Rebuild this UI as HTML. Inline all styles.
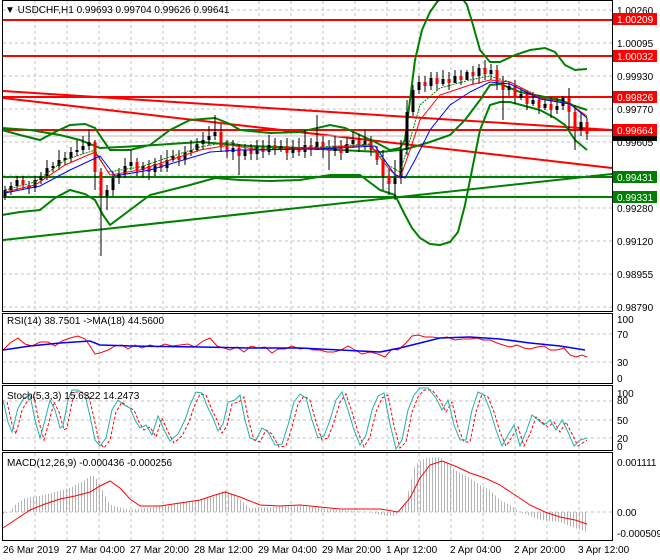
<!DOCTYPE html>
<html><head><meta charset="utf-8"><style>
html,body{margin:0;padding:0;background:#fff;}
svg{display:block;font-family:"Liberation Sans",sans-serif;}
</style></head><body>
<svg width="660" height="560" xmlns="http://www.w3.org/2000/svg">
<defs><pattern id="h" width="3" height="10" patternUnits="userSpaceOnUse"><rect x="0" y="0" width="1" height="10" fill="#b4b4b4"/></pattern></defs>
<rect width="660" height="560" fill="#fff"/>
<g stroke="#c0c0c0" stroke-dasharray="3,3" fill="none">
<path d="M35,1V311M67,1V311M99,1V311M131,1V311M163,1V311M195,1V311M227,1V311M259,1V311M291,1V311M323,1V311M355,1V311M387,1V311M419,1V311M451,1V311M483,1V311M515,1V311M547,1V311M579,1V311"/>
<path d="M35,314V383M67,314V383M99,314V383M131,314V383M163,314V383M195,314V383M227,314V383M259,314V383M291,314V383M323,314V383M355,314V383M387,314V383M419,314V383M451,314V383M483,314V383M515,314V383M547,314V383M579,314V383"/>
<path d="M35,386V450M67,386V450M99,386V450M131,386V450M163,386V450M195,386V450M227,386V450M259,386V450M291,386V450M323,386V450M355,386V450M387,386V450M419,386V450M451,386V450M483,386V450M515,386V450M547,386V450M579,386V450"/>
<path d="M35,453V540M67,453V540M99,453V540M131,453V540M163,453V540M195,453V540M227,453V540M259,453V540M291,453V540M323,453V540M355,453V540M387,453V540M419,453V540M451,453V540M483,453V540M515,453V540M547,453V540M579,453V540"/>
<path d="M3,10H612M3,43H612M3,76H612M3,109H612M3,142H612M3,175H612M3,208H612M3,241H612M3,274H612M3,307H612M3,334H612M3,362H612M3,401H612M3,420H612M3,438H612M3,512H612"/>
</g>
<!-- levels -->
<g stroke-width="2">
<path d="M3,20H612M3,56H612M3,97H612M3,130H612" stroke="#f00"/>
<path d="M3,177H612M3,197H612" stroke="#008000"/>
<path d="M3,91L612,130M3,98L612,168" stroke="#f00"/>
<path d="M3,240L612,174" stroke="#008000"/>
</g>
<path d="M3,136H612" stroke="#c0c0c0"/>
<!-- bands -->
<g fill="none" stroke="#008000" stroke-width="2">
<polyline points="2,130 20,135 40,140 55,132 70,125 85,124 95,128 103,140 110,150 130,150 150,145 170,130 190,120 215,118 230,124 240,130 270,133 300,132 330,125 345,128 360,135 375,142 390,150 400,148 405,140 410,100 415,60 422,30 430,12 437,2 445,-5 460,-5 467,5 473,25 480,50 490,62 500,62 515,55 530,50 545,48 555,52 565,65 575,70 587,69"/>
<polyline points="2,215 20,212 40,210 55,198 70,190 85,194 95,200 103,215 110,225 130,210 150,195 170,190 190,185 215,178 240,180 270,181 300,180 330,175 360,175 380,190 395,195 405,215 412,228 420,238 430,244 440,245 450,242 458,232 465,205 472,170 480,130 490,105 500,102 510,102 525,106 540,110 555,118 565,125 575,140 587,150"/>
<polyline points="2,128 30,130 60,135 80,140 100,148 140,146 200,142 250,146 300,148 340,150 380,152 400,150 410,148 430,142 450,135 465,120 480,100 490,85 500,84 520,92 540,96 560,100 575,106 587,110"/>
</g>
<!-- candles -->
<path fill="none" stroke="#000" stroke-width="1" d="M5,186V200M11,182V195M17,176V190M23,176V190M29,181V194M35,176V192M41,172V184M47,160V180M53,162V172M59,150V170M65,152V165M71,147V162M77,140V156M83,136V154M89,130V150M95,140V190M101,168V256M107,185V210M113,172V196M119,168V184M125,158V178M131,150V170M137,158V176M143,162V178M149,160V180M155,158V176M161,155V172M167,150V172M173,150V162M179,150V166M185,146V165M191,140V156M197,138V152M203,132V150M209,126V145M215,115V140M221,124V152M227,140V158M233,140V160M239,144V175M245,144V160M251,144V160M257,140V160M263,140V158M269,135V155M275,138V155M281,140V152M287,138V160M293,140V158M299,138V156M305,130V158M311,138V156M317,115V150M323,136V158M329,140V170M335,136V156M341,140V160M347,138V150M353,132V148M359,134V152M365,130V150M371,136V156M377,146V165M383,150V190M389,168V195M395,160V200M401,140V184M407,100V155M413,85V116M419,76V94M425,76V92M431,72V90M437,72V90M443,70V86M449,72V90M455,70V80M461,70V85M467,70V80M473,66V84M479,64V84M485,60V80M491,64V80M497,65V90M503,76V120M509,82V96M515,80V104M521,88V100M527,90V110M533,92V106M539,95V114M545,98V110M551,97V118M557,98V114M563,96V110M569,88V130M575,105V150M581,112V136M587,118V140"/>
<g fill="none" stroke-width="3">
<path stroke="#000" d="M5,196V190M11,190V186M17,186V180M35,188V180M41,180V176M47,176V168M53,168V166M59,166V160M65,160V158M71,158V152M77,152V150M83,150V146M89,146V142M107,196V190M113,190V178M119,178V174M125,174V166M131,166V162M143,170V166M155,172V164M167,168V160M173,160V156M185,160V152M191,152V150M197,150V144M203,144V140M209,140V136M215,136V132M233,152V148M245,156V150M257,154V147M269,152V145M281,150V146M293,153V147M305,152V145M317,150V142M335,151V146M347,153V144M353,144V140M365,145V141M395,184V178M401,178V150M407,150V112M413,112V90M419,90V82M431,86V78M443,84V79M455,83V76M467,80V72M479,76V68M491,74V70M509,90V86M521,98V94M533,104V100M545,108V104M557,110V106M563,106V98M581,130V122"/>
<path stroke="#f00" d="M23,180V185M29,185V188M95,142V172M101,172V196M137,162V170M149,166V172M161,164V168M179,156V160M221,132V146M227,146V152M239,148V156M251,150V154M263,147V152M275,145V150M287,146V153M299,147V152M311,145V150M323,142V148M329,148V151M341,146V153M359,140V145M371,141V150M377,150V160M383,160V176M389,176V184M425,82V86M437,78V84M449,79V83M461,76V80M473,72V76M485,68V74M497,70V82M503,82V90M515,86V98M527,94V104M539,100V108M551,104V110M569,98V112M575,112V130M587,122V134"/>
</g>
<!-- MAs -->
<g fill="none" stroke-width="1">
<polyline stroke="#008000" stroke-dasharray="2,1" points="5,190 35,182 65,160 95,150 108,172 140,167 200,147 228,142 260,149 320,147 370,144 388,165 400,172 410,140 420,105 440,88 470,80 490,76 510,82 540,97 570,103 587,117"/>
<polyline stroke="#f00" points="5,192 35,185 65,165 95,152 110,175 140,170 200,150 230,145 260,150 320,148 370,145 390,170 400,178 410,150 420,120 440,95 470,85 490,80 510,82 540,98 570,104 587,116"/>
<polyline stroke="#00f" points="5,193 40,186 70,170 100,156 115,176 150,170 210,152 240,150 320,149 375,146 395,175 405,178 415,160 430,130 450,105 470,92 490,82 510,84 540,99 570,104 587,118"/>
</g>
<!-- RSI -->
<polyline fill="none" stroke="#f00" points="3,350 10,343 18,338 25,344 32,346 40,342 48,342 55,346 62,341 70,338 78,336 85,339 90,346 95,354 100,353 108,350 115,346 122,345 128,349 135,345 142,348 150,345 158,347 165,344 172,346 180,345 188,344 195,347 203,341 210,338 217,346 224,348 230,350 237,347 244,352 251,346 258,348 265,347 272,353 278,349 285,349 292,346 300,349 307,348 313,350 320,350 327,352 334,352 341,350 348,346 355,350 362,354 370,352 378,354 385,357 392,349 398,350 405,344 412,336 418,335 425,337 432,337 440,338 447,337 455,340 462,339 470,339 477,338 483,340 490,340 497,343 503,345 510,347 517,345 524,348 530,349 537,347 544,346 550,350 557,350 564,348 570,355 576,357 582,355 587,357"/>
<polyline fill="none" stroke="#00f" stroke-width="1.5" points="3,350 30,346 60,343 90,341 100,345 130,346 200,347 250,348 300,348 340,350 380,352 400,348 420,343 440,338 470,337 500,339 530,343 560,346 585,350"/>
<!-- Stoch -->
<polyline fill="none" stroke="#f00" stroke-dasharray="3,2" transform="translate(4,2)" points="3,400 8,422 12,432 18,408 24,398 30,395 35,420 40,438 45,420 50,400 55,410 60,428 63,426 68,400 72,390 78,390 85,395 90,416 95,440 100,446 106,438 112,410 118,400 124,405 130,408 135,420 140,428 146,425 152,435 158,416 164,430 170,441 178,434 185,420 190,405 196,392 202,393 208,408 213,418 218,431 223,424 228,402 235,400 240,395 245,420 250,438 256,440 262,428 268,432 275,445 282,444 288,425 294,402 300,394 306,398 312,420 318,438 324,436 330,420 336,400 342,392 348,410 354,430 360,445 366,435 372,410 378,396 384,393 390,424 396,446 402,440 408,410 414,395 420,388 428,388 436,398 442,410 448,400 454,425 460,440 466,440 472,410 478,392 484,395 490,410 496,430 502,444 508,435 514,425 520,444 526,432 532,415 538,420 544,425 550,420 556,430 562,420 568,432 574,444 580,440 583,438"/>
<polyline fill="none" stroke="#20b2aa" points="3,400 8,422 12,432 18,408 24,398 30,395 35,420 40,438 45,420 50,400 55,410 60,428 63,426 68,400 72,390 78,390 85,395 90,416 95,440 100,446 106,438 112,410 118,400 124,405 130,408 135,420 140,428 146,425 152,435 158,416 164,430 170,441 178,434 185,420 190,405 196,392 202,393 208,408 213,418 218,431 223,424 228,402 235,400 240,395 245,420 250,438 256,440 262,428 268,432 275,445 282,444 288,425 294,402 300,394 306,398 312,420 318,438 324,436 330,420 336,400 342,392 348,410 354,430 360,445 366,435 372,410 378,396 384,393 390,424 396,449 402,440 408,410 414,395 420,388 428,388 436,398 442,410 448,400 454,425 460,440 466,440 472,410 478,392 484,395 490,410 496,430 502,446 508,435 514,425 520,446 526,432 532,415 538,420 544,425 550,420 556,430 562,420 568,432 574,446 580,440 587,438"/>
<!-- MACD -->
<polygon fill="url(#h)" points="3,512 3,514 10,512 15,505 25,498 40,496 55,492 70,488 85,480 90,476 95,476 100,485 110,505 130,510 170,505 200,500 215,496 225,490 235,495 250,508 300,506 340,510 370,512 380,515 395,516 405,505 415,465 425,458 440,457 455,470 470,478 480,485 490,490 500,500 510,505 520,512 540,520 560,522 580,530 587,532 587,512"/>
<polyline fill="none" stroke="#f00" points="3,528 15,520 30,510 45,504 60,499 75,496 90,492 100,486 110,481 120,488 130,499 140,506 160,506 180,503 200,500 215,495 225,492 240,497 260,505 280,506 300,505 320,507 340,509 360,509 380,509 398,512 410,498 420,478 430,465 442,461 455,466 470,473 485,478 500,485 515,495 530,505 545,512 560,517 575,520 587,524"/>
<!-- frames -->
<g fill="none" stroke="#000" stroke-width="1">
<rect x="2.5" y="0.5" width="610" height="311"/>
<rect x="2.5" y="313.5" width="610" height="70"/>
<rect x="2.5" y="385.5" width="610" height="65"/>
<rect x="2.5" y="452.5" width="610" height="88"/>
</g>
<g font-size="10" fill="#000">
<text x="5" y="13">▼ USDCHF,H1  0.99693 0.99704 0.99626 0.99641</text>
<text x="617" y="14">1.00260</text>
<text x="617" y="47">1.00095</text>
<text x="617" y="80">0.99930</text>
<text x="617" y="113">0.99770</text>
<text x="617" y="146">0.99605</text>
<text x="617" y="212">0.99280</text>
<text x="617" y="245">0.99120</text>
<text x="617" y="278">0.98955</text>
<text x="617" y="311">0.98790</text>
<text x="7" y="324">RSI(14) 38.7501  -&gt;MA(18) 44.5600</text>
<text x="617" y="323">100</text><text x="617" y="338">70</text><text x="617" y="366">30</text><text x="617" y="382">0</text>
<text x="7" y="399">Stoch(5,3,3) 15.6322 14.2473</text>
<text x="617" y="397">100</text><text x="617" y="404">80</text><text x="617" y="424">50</text><text x="617" y="442">20</text><text x="617" y="450">0</text>
<text x="7" y="466">MACD(12,26,9) -0.000436 -0.000256</text>
<text x="617" y="466">0.001111</text><text x="617" y="516">0.00</text><text x="617" y="537">-0.000509</text>
<text x="3" y="553">26 Mar 2019</text><text x="66" y="553">27 Mar 04:00</text><text x="130" y="553">27 Mar 20:00</text><text x="194" y="553">28 Mar 12:00</text><text x="258" y="553">29 Mar 04:00</text><text x="322" y="553">29 Mar 20:00</text><text x="386" y="553">1 Apr 12:00</text><text x="450" y="553">2 Apr 04:00</text><text x="514" y="553">2 Apr 20:00</text><text x="578" y="553">3 Apr 12:00</text>
</g>
<g font-size="10">
<rect x="613" y="13" width="44" height="12" fill="#f00"/><text x="617" y="23" fill="#fff">1.00209</text>
<rect x="613" y="50" width="44" height="12" fill="#f00"/><text x="617" y="60" fill="#fff">1.00032</text>
<rect x="613" y="91" width="44" height="12" fill="#f00"/><text x="617" y="101" fill="#fff">0.99826</text>
<rect x="613" y="124" width="44" height="12" fill="#f00"/><text x="617" y="134" fill="#fff">0.99664</text>
<rect x="613" y="136" width="44" height="5" fill="#000"/>
<rect x="613" y="171" width="44" height="12" fill="#008000"/><text x="617" y="181" fill="#fff">0.99431</text>
<rect x="613" y="191" width="44" height="12" fill="#008000"/><text x="617" y="201" fill="#fff">0.99331</text>
</g>
</svg>
</body></html>
